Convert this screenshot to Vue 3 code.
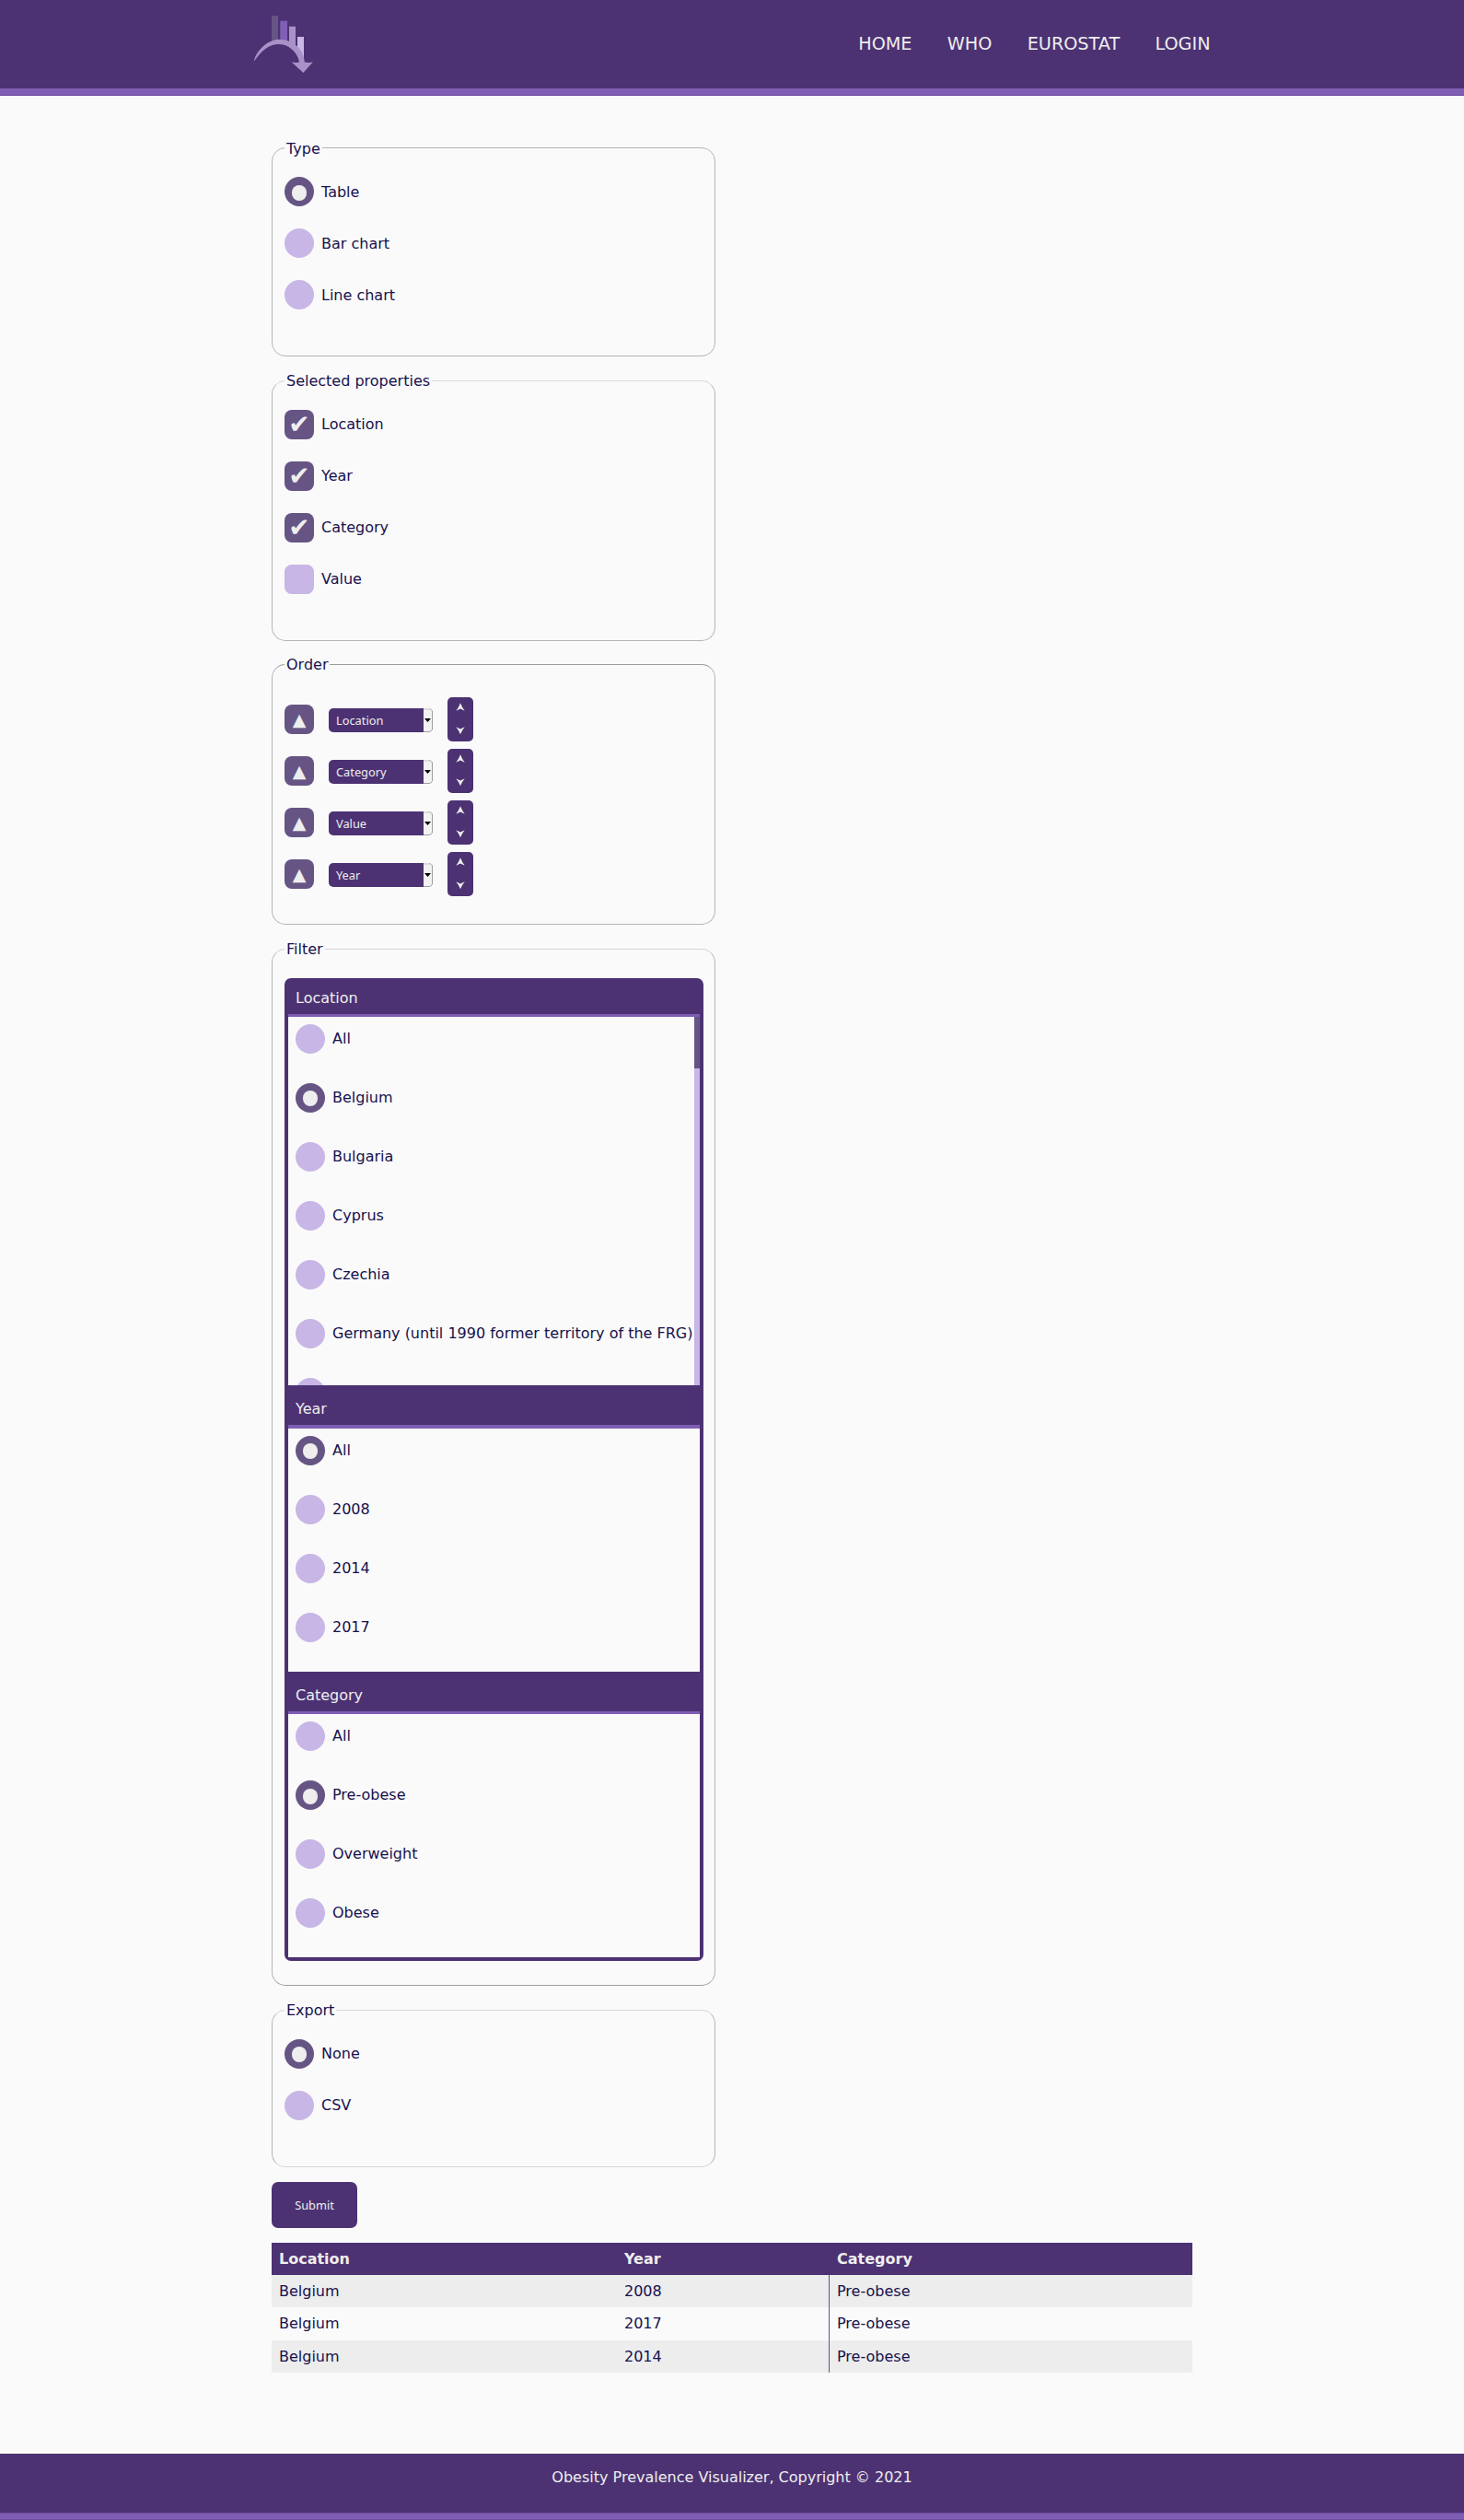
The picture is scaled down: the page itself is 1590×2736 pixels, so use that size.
<script setup>
import { ref } from 'vue'

const nav = ['HOME', 'WHO', 'EUROSTAT', 'LOGIN']
const types = ['Table', 'Bar chart', 'Line chart']
const type = ref('Table')
const properties = ref([
  { name: 'Location', on: true },
  { name: 'Year', on: true },
  { name: 'Category', on: true },
  { name: 'Value', on: false }
])
const orders = ['Location', 'Category', 'Value', 'Year']
const filters = ref([
  {
    key: 'location',
    title: 'Location',
    value: 'Belgium',
    items: ['All', 'Belgium', 'Bulgaria', 'Cyprus', 'Czechia', 'Germany (until 1990 former territory of the FRG)', '']
  },
  { key: 'year', title: 'Year', value: 'All', items: ['All', '2008', '2014', '2017'] },
  { key: 'category', title: 'Category', value: 'Pre-obese', items: ['All', 'Pre-obese', 'Overweight', 'Obese'] }
])
const exports = ['None', 'CSV']
const exportAs = ref('None')
const years = ['2008', '2017', '2014']
</script>

<template>
  <div class="page">
    <header class="top">
      <div class="bar">
        <svg class="logo" width="66" height="66" viewBox="275 15 66 66">
          <rect x="295" y="17" width="7" height="28" fill="#665584" />
          <rect x="304.300" y="22.700" width="7.700" height="22" fill="#805eb5" />
          <path d="M314 28.700h7V52l-7-5z" fill="#a892c8" />
          <path d="M323 40h7v24l-7-10z" fill="#c9b8e6" />
          <path
            d="M276 66.500C277 57 290 42.700 303 42.700C319 42.700 330 54 330.800 67.500Q336 68.500 340 67.300L329.400 79L316.500 67.300Q321 68.500 325 67.500C324 59 315 48 303 48C292 48 284 55 276 66.500Z"
            fill="#a892c8"
          />
        </svg>
        <nav class="nav">
          <a v-for="n in nav" :key="n">{{ n }}</a>
        </nav>
      </div>
    </header>

    <main class="content">
      <fieldset class="group type">
        <legend>Type</legend>
        <div class="options">
          <label v-for="t in types" :key="t" class="option" @click="type = t">
            <span class="radio" :class="{ on: type === t }"></span>
            <span class="text">{{ t }}</span>
          </label>
        </div>
      </fieldset>

      <fieldset class="group properties">
        <legend>Selected properties</legend>
        <div class="options">
          <label v-for="p in properties" :key="p.name" class="option" @click="p.on = !p.on">
            <span class="check" :class="{ on: p.on }">{{ p.on ? '✔' : '' }}</span>
            <span class="text">{{ p.name }}</span>
          </label>
        </div>
      </fieldset>

      <fieldset class="group order">
        <legend>Order</legend>
        <div class="sorters">
          <div v-for="o in orders" :key="o" class="sorter">
            <span class="direction">▲</span>
            <div class="select">
              <span class="value">{{ o }}</span>
              <span class="arrow"><i></i></span>
            </div>
            <div class="move">
              <svg width="28" height="48" viewBox="0 0 28 48">
                <path d="M14 6.300Q16 11.500 18.700 14.800L14 12.600L9.300 14.800Q12 11.500 14 6.300Z" fill="#eee" />
                <path d="M14 40.300Q16 35.500 18.700 32.300L14 34.500L9.300 32.300Q12 35.500 14 40.300Z" fill="#eee" />
              </svg>
            </div>
          </div>
        </div>
      </fieldset>

      <fieldset class="group filter">
        <legend>Filter</legend>
        <div class="panel">
          <section v-for="f in filters" :key="f.key" :class="f.key">
            <h3>{{ f.title }}</h3>
            <div class="scroller">
              <div class="list">
                <label v-for="i in f.items" :key="i" class="option" @click="f.value = i">
                  <span class="radio" :class="{ on: f.value === i }"></span>
                  <span class="text">{{ i }}</span>
                </label>
              </div>
              <div v-if="f.key === 'location'" class="track"><div class="thumb"></div></div>
            </div>
          </section>
        </div>
      </fieldset>

      <fieldset class="group export">
        <legend>Export</legend>
        <div class="options">
          <label v-for="e in exports" :key="e" class="option" @click="exportAs = e">
            <span class="radio" :class="{ on: exportAs === e }"></span>
            <span class="text">{{ e }}</span>
          </label>
        </div>
      </fieldset>

      <button class="submit">Submit</button>

      <table>
        <thead>
          <tr><th class="loc">Location</th><th class="yr">Year</th><th>Category</th></tr>
        </thead>
        <tbody>
          <tr v-for="y in years" :key="y">
            <td>Belgium</td><td>{{ y }}</td><td class="last">Pre-obese</td>
          </tr>
        </tbody>
      </table>
    </main>

    <footer class="bottom">Obesity Prevalence Visualizer, Copyright © 2021</footer>
  </div>
</template>

<style>
body { background: #fafafa; }
</style>

<style scoped>
.page {
  display: flex;
  flex-direction: column;
  height: 2736px;
  background: #fafafa;
  color: #17114d;
  font: 16px/19px "DejaVu Sans", sans-serif;
}
.page * { box-sizing: border-box; }
.top {
  height: 103px;
  background: #4c3273;
  border-bottom: 7px solid #7f5db3;
  box-shadow: 0 1px #6d4a9f;
}
.bar {
  width: 1040px;
  height: 96px;
  margin: 0 auto;
  display: flex;
  justify-content: space-between;
}
.logo { margin-top: 15px; }
.nav {
  display: flex;
  gap: 38.4px;
  padding: 37px 0.5px 0 0;
  font-size: 19.2px;
  line-height: 22px;
  color: #eee;
}
.content {
  width: 1000px;
  margin: 0 auto;
  padding-top: 48px;
  flex: 1;
}
.group {
  width: 482px;
  min-width: 0;
  margin: 0;
  padding: 0 12px 0 13px;
  border: 1px solid #b4b5b5;
  border-radius: 15px;
}
legend {
  height: 19px;
  padding: 0 2px;
  line-height: 19px;
}
.type { height: 236px; }
.type legend { padding-top: 1px; }
.properties { height: 292px; margin-top: 17px; border-top-color: #d8d9d9; }
.order { height: 292px; margin-top: 16px; border-top-color: #9c9e9d; }
.filter { height: 1135px; margin-top: 17px; border-top-color: #d4d5d5; border-bottom-color: #9c9e9d; }
.export { height: 180px; margin-top: 17px; border-top-color: #d8d9d9; border-bottom-color: #d4d5d5; }
.options {
  display: flex;
  flex-direction: column;
  gap: 24px;
  padding-top: 22px;
}
.option {
  display: flex;
  height: 32px;
  gap: 8px;
  flex: none;
}
.text { padding-top: 6px; white-space: nowrap; }
.type .text { padding-top: 7px; }
.radio {
  width: 32px;
  height: 32px;
  flex: none;
  border-radius: 50%;
  background: #c8b6e6;
}
.radio.on { background: #665584; padding: 8.400px 0 0 7.600px; }
.radio.on::after {
  content: "";
  display: block;
  width: 16.800px;
  height: 16.800px;
  border-radius: 50%;
  background: #eee;
}
.type .radio.on { padding-top: 9.200px; }
.category .radio.on { padding-top: 9.400px; }
.check, .direction {
  width: 32px;
  height: 32px;
  flex: none;
  border-radius: 8px;
  background: #c8b6e6;
  color: #eee;
  font-size: 28px;
  line-height: 31px;
  text-align: center;
}
.check.on, .direction { background: #665584; }
.direction { font-size: 19px; line-height: 32px; }
.sorters {
  display: flex;
  flex-direction: column;
  gap: 8px;
  padding-top: 26px;
}
.sorter { display: flex; align-items: center; height: 48px; }
.select {
  display: flex;
  width: 113px;
  height: 26px;
  margin: 2px 16px 0;
  border-radius: 5px;
  overflow: hidden;
  background: #4c3273;
  color: #eee;
  font: 12.8px/26px "Noto Sans", sans-serif;
}
.value { flex: 1; padding-left: 8px; }
.arrow {
  width: 10px;
  display: flex;
  justify-content: center;
  background: #f3f3f3;
  border: solid #a0a0a0;
  border-width: 2px 1px 1px 0;
  border-top-color: #ddd;
  border-radius: 0 4px 4px 0;
}
.arrow i {
  width: 7px;
  height: 4px;
  margin-top: 9px;
  background: #000;
  clip-path: polygon(0 0, 100% 0, 50% 100%);
}
.move {
  width: 28px;
  height: 48px;
  border-radius: 5px;
  background: #4c3273;
}
.move svg { display: block; }
.panel {
  width: 455px;
  height: 1067px;
  margin-top: 22px;
  border: 4px solid #4c3273;
  border-radius: 7px;
  background: #4c3273;
}
h3 {
  height: 46px;
  margin: 0;
  padding: 16px 8px 0;
  border-bottom: 3px solid #7f5db3;
  background: #4c3273;
  color: #eee;
  font-size: 16px;
  line-height: 19px;
  font-weight: 400;
}
.location h3 { height: 38px; padding-top: 8px; }
.year h3 { height: 47px; border-bottom-width: 4px; }
.scroller { display: flex; height: 264px; background: #fafafa; }
.location .scroller { height: 400px; overflow: hidden; }
.list {
  flex: 1;
  display: flex;
  flex-direction: column;
  gap: 32px;
  padding: 8px 0 0 8px;
}
.track { width: 6px; flex: none; background: #c8b6e6; }
.thumb { height: 56px; background: #665584; }
.submit {
  display: block;
  width: 93px;
  height: 50px;
  margin: 16px 0;
  padding: 0;
  border: 0;
  border-radius: 7px;
  background: #4c3273;
  color: #eee;
  font: 12.8px "Noto Sans", sans-serif;
}
table {
  width: 1000px;
  table-layout: fixed;
  border-collapse: separate;
  border-spacing: 0;
}
th, td {
  height: 35px;
  padding: 0 8px 1px;
  text-align: left;
  line-height: 19px;
}
th { background: #4c3273; color: #eee; font-weight: 700; }
.loc { width: 375px; }
.yr { width: 230px; }
th:last-child { padding-left: 9px; }
tbody tr:nth-child(odd) { background: #ededed; }
tbody tr:nth-child(2) td { height: 36px; padding-bottom: 2px; }
.last { border-left: 1px solid #5d568a; }
.bottom {
  height: 72px;
  padding-top: 16px;
  background: linear-gradient(#4c3273 64px, #6f4ea3 64px 65px, #7f5db3 65px 71px, #6f4ea3 71px);
  color: #eee;
  text-align: center;
}
</style>
